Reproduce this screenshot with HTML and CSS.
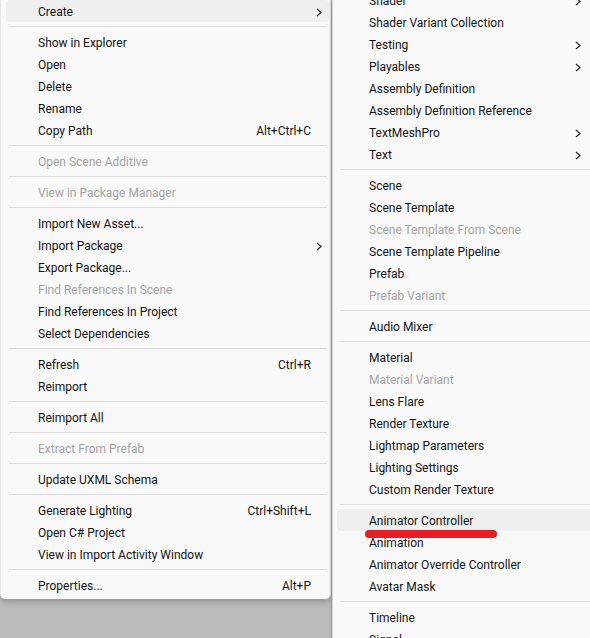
FILE: index.html
```html
<!DOCTYPE html>
<html>
<head>
<meta charset="utf-8">
<link rel="stylesheet" href="styles.css">
</head>
<body>
<div class="screen">
  <div class="menu left">
    <div class="item hl"><span class="label">Create</span><span class="arrow"><svg width="6" height="9" viewBox="0 0 6 9"><polyline points="1,1 5,4.5 1,8"/></svg></span></div>
    <div class="sep"></div>
    <div class="item"><span class="label">Show in Explorer</span><span class="arrow"></span></div>
    <div class="item"><span class="label">Open</span><span class="arrow"></span></div>
    <div class="item"><span class="label">Delete</span><span class="arrow"></span></div>
    <div class="item"><span class="label">Rename</span><span class="arrow"></span></div>
    <div class="item"><span class="label">Copy Path</span><span class="key">Alt+Ctrl+C</span><span class="arrow"></span></div>
    <div class="sep"></div>
    <div class="item off"><span class="label">Open Scene Additive</span><span class="arrow"></span></div>
    <div class="sep"></div>
    <div class="item off"><span class="label">View in Package Manager</span><span class="arrow"></span></div>
    <div class="sep"></div>
    <div class="item"><span class="label">Import New Asset...</span><span class="arrow"></span></div>
    <div class="item"><span class="label">Import Package</span><span class="arrow"><svg width="6" height="9" viewBox="0 0 6 9"><polyline points="1,1 5,4.5 1,8"/></svg></span></div>
    <div class="item"><span class="label">Export Package...</span><span class="arrow"></span></div>
    <div class="item off"><span class="label">Find References In Scene</span><span class="arrow"></span></div>
    <div class="item"><span class="label">Find References In Project</span><span class="arrow"></span></div>
    <div class="item"><span class="label">Select Dependencies</span><span class="arrow"></span></div>
    <div class="sep"></div>
    <div class="item"><span class="label">Refresh</span><span class="key">Ctrl+R</span><span class="arrow"></span></div>
    <div class="item"><span class="label">Reimport</span><span class="arrow"></span></div>
    <div class="sep"></div>
    <div class="item"><span class="label">Reimport All</span><span class="arrow"></span></div>
    <div class="sep"></div>
    <div class="item off"><span class="label">Extract From Prefab</span><span class="arrow"></span></div>
    <div class="sep"></div>
    <div class="item"><span class="label">Update UXML Schema</span><span class="arrow"></span></div>
    <div class="sep"></div>
    <div class="item"><span class="label">Generate Lighting</span><span class="key">Ctrl+Shift+L</span><span class="arrow"></span></div>
    <div class="item"><span class="label">Open C# Project</span><span class="arrow"></span></div>
    <div class="item"><span class="label">View in Import Activity Window</span><span class="arrow"></span></div>
    <div class="sep"></div>
    <div class="item"><span class="label">Properties...</span><span class="key">Alt+P</span><span class="arrow"></span></div>
  </div>
  <div class="menu right">
    <div class="item"><span class="label">Shader</span><span class="arrow"><svg width="6" height="9" viewBox="0 0 6 9"><polyline points="1,1 5,4.5 1,8"/></svg></span></div>
    <div class="item"><span class="label">Shader Variant Collection</span><span class="arrow"></span></div>
    <div class="item"><span class="label">Testing</span><span class="arrow"><svg width="6" height="9" viewBox="0 0 6 9"><polyline points="1,1 5,4.5 1,8"/></svg></span></div>
    <div class="item"><span class="label">Playables</span><span class="arrow"><svg width="6" height="9" viewBox="0 0 6 9"><polyline points="1,1 5,4.5 1,8"/></svg></span></div>
    <div class="item"><span class="label">Assembly Definition</span><span class="arrow"></span></div>
    <div class="item"><span class="label">Assembly Definition Reference</span><span class="arrow"></span></div>
    <div class="item"><span class="label">TextMeshPro</span><span class="arrow"><svg width="6" height="9" viewBox="0 0 6 9"><polyline points="1,1 5,4.5 1,8"/></svg></span></div>
    <div class="item"><span class="label">Text</span><span class="arrow"><svg width="6" height="9" viewBox="0 0 6 9"><polyline points="1,1 5,4.5 1,8"/></svg></span></div>
    <div class="sep"></div>
    <div class="item"><span class="label">Scene</span><span class="arrow"></span></div>
    <div class="item"><span class="label">Scene Template</span><span class="arrow"></span></div>
    <div class="item off"><span class="label">Scene Template From Scene</span><span class="arrow"></span></div>
    <div class="item"><span class="label">Scene Template Pipeline</span><span class="arrow"></span></div>
    <div class="item"><span class="label">Prefab</span><span class="arrow"></span></div>
    <div class="item off"><span class="label">Prefab Variant</span><span class="arrow"></span></div>
    <div class="sep"></div>
    <div class="item"><span class="label">Audio Mixer</span><span class="arrow"></span></div>
    <div class="sep"></div>
    <div class="item"><span class="label">Material</span><span class="arrow"></span></div>
    <div class="item off"><span class="label">Material Variant</span><span class="arrow"></span></div>
    <div class="item"><span class="label">Lens Flare</span><span class="arrow"></span></div>
    <div class="item"><span class="label">Render Texture</span><span class="arrow"></span></div>
    <div class="item"><span class="label">Lightmap Parameters</span><span class="arrow"></span></div>
    <div class="item"><span class="label">Lighting Settings</span><span class="arrow"></span></div>
    <div class="item"><span class="label">Custom Render Texture</span><span class="arrow"></span></div>
    <div class="sep"></div>
    <div class="item hl"><span class="label">Animator Controller</span><span class="arrow"></span></div>
    <div class="item"><span class="label">Animation</span><span class="arrow"></span></div>
    <div class="item"><span class="label">Animator Override Controller</span><span class="arrow"></span></div>
    <div class="item"><span class="label">Avatar Mask</span><span class="arrow"></span></div>
    <div class="sep"></div>
    <div class="item"><span class="label">Timeline</span><span class="arrow"></span></div>
    <div class="item"><span class="label">Signal</span><span class="arrow"></span></div>
  </div>
  <svg class="mark" width="134" height="12" viewBox="0 0 134 12"><line x1="5" y1="6" x2="129" y2="6"/></svg>
</div>
</body>
</html>
```

FILE: styles.css
```css
html, body {
  margin: 0;
  padding: 0;
}
body {
  width: 590px;
  height: 638px;
  overflow: hidden;
  background: #bcbcbc;
  font-family: Roboto, "Noto Sans", "Liberation Sans", sans-serif;
  font-size: 12px;
  color: #141414;
}
.screen {
  position: relative;
  display: flex;
  align-items: flex-start;
  width: 590px;
  height: 638px;
  overflow: hidden;
}
.menu {
  box-sizing: border-box;
  background: #f9f9f9;
  flex: none;
}
.left {
  width: 331px;
  padding: 0 1px 3px 5px;
  border-radius: 0 0 5px 5px;
  border-left: 1px solid #e6e6e6;
  border-right: 1px solid #e2e2e2;
  box-shadow: 0 3px 6px rgba(0, 0, 0, 0.22);
}
.right {
  width: 262px;
  height: 660px;
  margin-top: -11px;
  margin-left: 1px;
  padding-left: 4px;
  border-left: 1px solid #d6d6d6;
  box-shadow: -1px 0 3px rgba(0, 0, 0, 0.18);
}
.item {
  box-sizing: border-box;
  height: 22px;
  display: flex;
  align-items: center;
  padding-left: 32px;
  padding-top: 2px;
  border-radius: 4px;
  white-space: nowrap;
}
.item.hl {
  background: #efefef;
}
.item.off {
  color: #a4a4a4;
}
.label {
  flex: 1;
}
.key {
  flex: none;
}
.arrow {
  flex: none;
  width: 18px;
  height: 20px;
  display: flex;
  align-items: center;
  padding-left: 5px;
  box-sizing: border-box;
}
.right .arrow {
  width: 24px;
}
.arrow svg polyline {
  fill: none;
  stroke: #2a2a2a;
  stroke-width: 1.2;
}
.sep {
  height: 1px;
  background: #dddddd;
  margin: 4px 2px 4px 3px;
}
.right .sep {
  margin: 4px 0 4px 3px;
}
.mark {
  position: absolute;
  left: 364px;
  top: 528px;
}
.mark line {
  stroke: #e61e26;
  stroke-width: 8;
  stroke-linecap: round;
}
```
